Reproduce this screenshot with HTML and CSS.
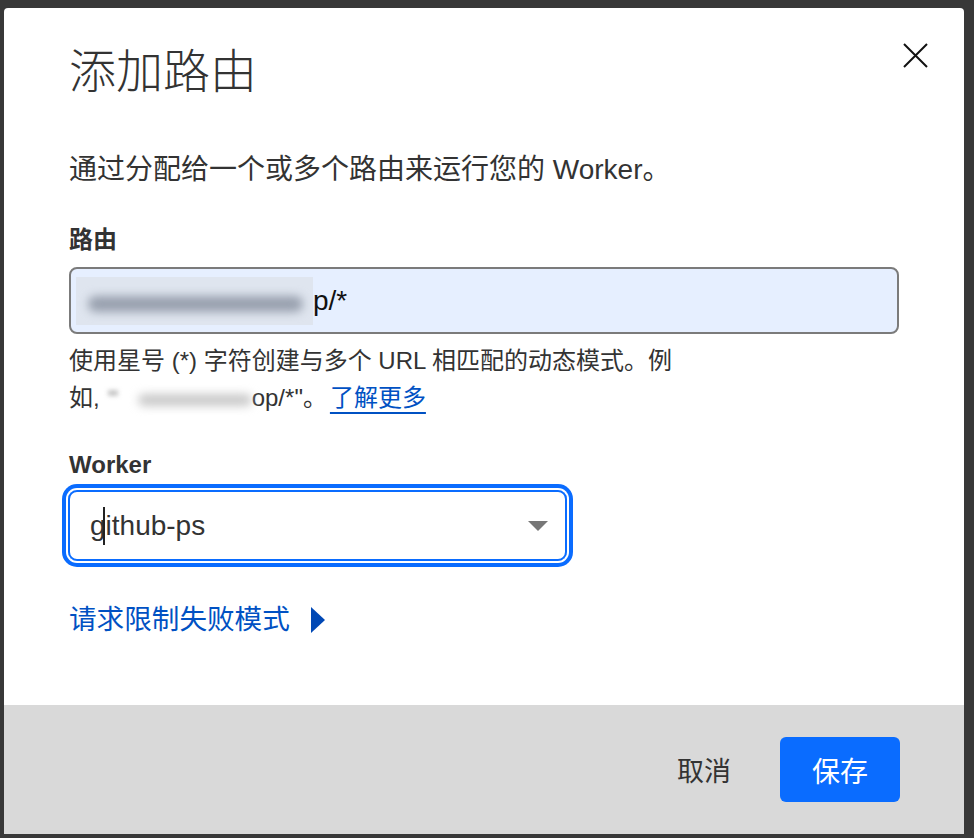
FILE: index.html
```html
<!DOCTYPE html>
<html lang="zh-CN">
<head>
<meta charset="utf-8">
<title>添加路由</title>
<link rel="stylesheet" href="styles.css">
</head>
<body>
<div class="backdrop">
  <div class="modal">
    <button class="close" aria-label="关闭">
      <svg width="25" height="25" viewBox="0 0 25 25"><path d="M1 1 L24 24 M24 1 L1 24" stroke="#111" stroke-width="2" fill="none"/></svg>
    </button>
    <div class="modal-body">
      <h1 class="title">添加路由</h1>
      <p class="desc">通过分配给一个或多个路由来运行您的 Worker。</p>
      <label class="label">路由</label>
      <div class="input">
        <span class="blur-box"><span class="blur-bar"></span></span><span class="val">p/*</span>
      </div>
      <p class="helper"><span>使用星号 (*) 字符创建与多个 URL 相匹配的动态模式。例</span><span>如,</span><span class="blur-inline"><span class="blur-quote"></span><span class="blur-light"></span></span><span>op/*"。</span><a class="learn" href="#">了解更多</a></p>
      <label class="label label-worker">Worker</label>
      <div class="select">
        <span class="select-val">g<span class="caret"></span>ithub-ps</span>
        <span class="arrow"></span>
      </div>
      <a class="expander" href="#">请求限制失败模式<span class="tri"></span></a>
    </div>
    <div class="modal-footer">
      <button class="btn-cancel">取消</button>
      <button class="btn-save">保存</button>
    </div>
  </div>
</div>
</body>
</html>
```
FILE: styles.css
```css
html, body {
  margin: 0;
  padding: 0;
  height: 100%;
}
body {
  background: #383838;
  font-family: "Liberation Sans", "Noto Sans CJK SC", sans-serif;
  color: #333;
}
.backdrop {
  padding: 8px 10px 4px 4px;
  height: 838px;
  box-sizing: border-box;
}
.modal {
  position: relative;
  background: #fff;
  height: 826px;
  border-radius: 4px 4px 0 0;
  display: flex;
  flex-direction: column;
  overflow: hidden;
}
.close {
  position: absolute;
  top: 35px;
  right: 36px;
  width: 25px;
  height: 25px;
  padding: 0;
  border: 0;
  background: none;
  display: flex;
}
.modal-body {
  flex: 1;
  padding: 36px 65px 0 65px;
  display: flex;
  flex-direction: column;
  align-items: flex-start;
}
.title {
  margin: 0;
  font-size: 47px;
  line-height: 56px;
  font-weight: 300;
  color: #333;
}
.desc {
  margin: 50px 0 0;
  font-size: 28px;
  line-height: 40px;
}
.label {
  display: block;
  margin-top: 34px;
  font-size: 24px;
  line-height: 32px;
  font-weight: 700;
  color: #333;
}
.input {
  margin-top: 11px;
  box-sizing: border-box;
  width: 830px;
  height: 67px;
  border: 2px solid #7b7b7b;
  border-radius: 8px;
  background: #e6efff;
  display: flex;
  align-items: center;
  padding-left: 5px;
  font-size: 28px;
  color: #111;
}
.blur-box {
  width: 237px;
  height: 48px;
  background: #dfe5ef;
  overflow: hidden;
  display: flex;
  align-items: center;
  padding-left: 12px;
  box-sizing: border-box;
}
.blur-bar {
  display: block;
  width: 215px;
  height: 16px;
  border-radius: 8px;
  background: #98a0ae;
  filter: blur(5px);
  margin-top: 6px;
}
.val {
  line-height: 1;
}
.helper {
  margin: 8px 0 0;
  width: 615px;
  font-size: 24px;
  line-height: 37px;
  color: #333;
}
.blur-inline {
  display: inline-flex;
  align-items: center;
  width: 152px;
  height: 37px;
  vertical-align: top;
}
.blur-quote {
  display: block;
  width: 10px;
  height: 6px;
  margin-left: 8px;
  margin-bottom: 10px;
  background: #c8c8c8;
  filter: blur(2px);
}
.blur-light {
  display: block;
  width: 115px;
  height: 12px;
  margin-left: 20px;
  margin-top: 4px;
  border-radius: 6px;
  background: #c9c9c9;
  filter: blur(5px);
}
.learn {
  margin-left: 3px;
  color: #0051c3;
  text-decoration: underline;
  text-decoration-thickness: 2px;
  text-underline-offset: 6px;
}
.label-worker {
  margin-top: 33px;
}
.select {
  margin-top: 9px;
  margin-left: -1px;
  box-sizing: border-box;
  width: 499px;
  height: 71px;
  border: 2px solid #0a6cff;
  border-radius: 9px;
  box-shadow: 0 0 0 2px #fff, 0 0 0 6px #0a6cff;
  display: flex;
  align-items: center;
  justify-content: space-between;
  padding: 0 17px 0 20px;
  font-size: 28px;
  color: #333;
}
.select-val {
  display: inline-flex;
  align-items: center;
}
.caret {
  display: inline-block;
  width: 2px;
  height: 38px;
  background: #222;
  margin-left: -3px;
  margin-right: 1px;
}
.arrow {
  width: 0;
  height: 0;
  border-left: 10px solid transparent;
  border-right: 10px solid transparent;
  border-top: 10px solid #777;
}
.expander {
  margin-top: 39px;
  font-size: 27.6px;
  line-height: 40px;
  color: #0051c3;
  text-decoration: none;
  display: inline-flex;
  align-items: center;
}
.tri {
  display: inline-block;
  margin-left: 21px;
  width: 0;
  height: 0;
  border-top: 13px solid transparent;
  border-bottom: 13px solid transparent;
  border-left: 14px solid #0048b5;
}
.modal-footer {
  height: 129px;
  background: #d9d9d9;
  display: flex;
  align-items: center;
  justify-content: flex-end;
  padding-right: 64px;
}
.btn-cancel {
  border: 0;
  background: none;
  font-family: inherit;
  font-size: 27px;
  color: #333;
  padding: 0 24px;
  margin-right: 25px;
  height: 65px;
}
.btn-save {
  border: 0;
  background: #0a6cff;
  color: #fff;
  font-family: inherit;
  font-size: 28px;
  width: 120px;
  height: 65px;
  border-radius: 6px;
}
```
